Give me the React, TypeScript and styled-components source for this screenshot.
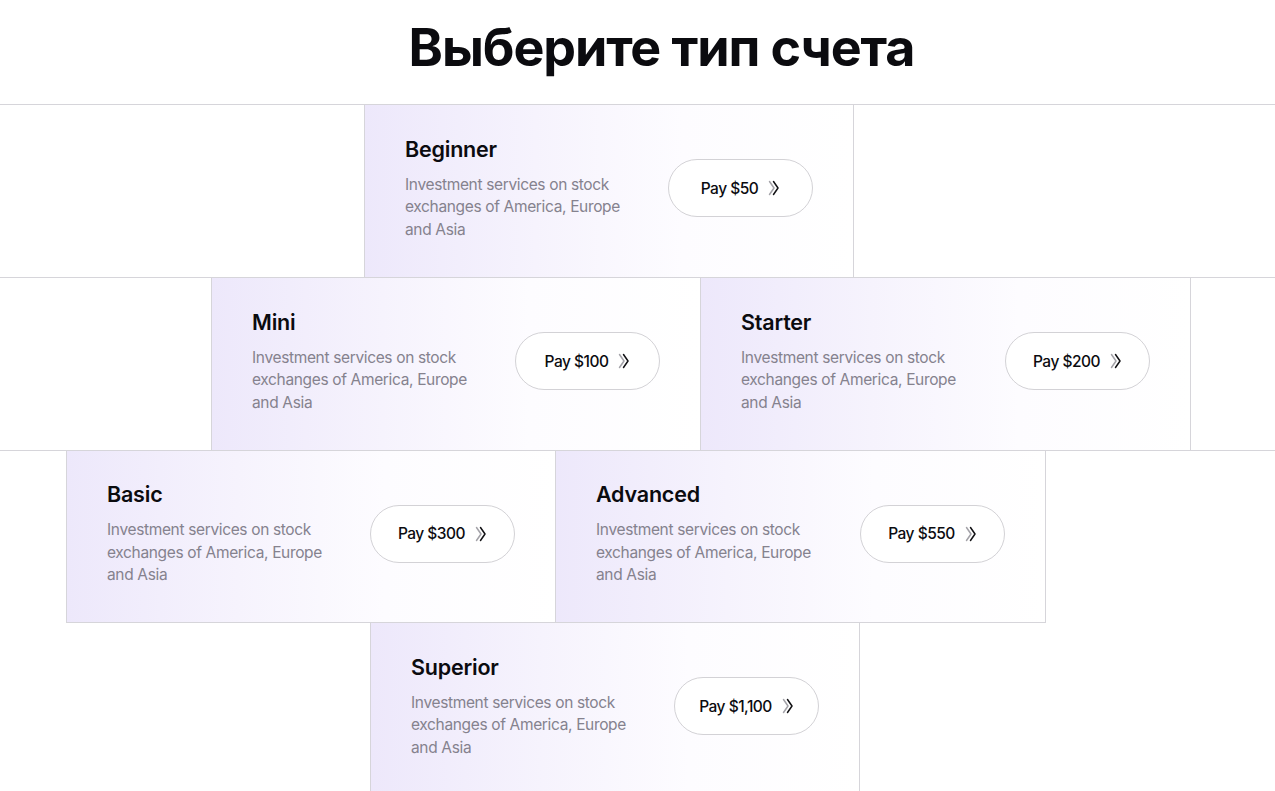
import React from "react";
import styled, { createGlobalStyle } from "styled-components";

const GlobalStyle = createGlobalStyle`
  html, body {
    margin: 0;
    padding: 0;
    background: #ffffff;
    font-family: Inter, "Noto Sans", "Liberation Sans", sans-serif;
    color: #0d0d12;
    overflow: hidden;
  }
  * { box-sizing: border-box; }
`;

const Page = styled.main`
  width: 1275px;
  height: 791px;
  overflow: hidden;
`;

const Header = styled.header`
  height: 104px;
  display: flex;
  align-items: center;
  justify-content: center;
  padding-left: 48px;
  padding-bottom: 8px;
`;

const Title = styled.h1`
  margin: 0;
  font-size: 52px;
  font-weight: 700;
  letter-spacing: -1.1px;
  line-height: 1;
  color: #0b0b0f;
`;

const Row = styled.section<{ $offset: number; $top?: boolean; $bottom?: boolean }>`
  display: flex;
  padding-left: ${(p) => p.$offset}px;
  border-top: ${(p) => (p.$top ? "1px solid #d6d5da" : "none")};
  border-bottom: ${(p) => (p.$bottom ? "1px solid #d6d5da" : "none")};
`;

const Card = styled.article<{ $closed?: boolean }>`
  width: 490px;
  height: 172px;
  flex: none;
  display: flex;
  align-items: center;
  justify-content: space-between;
  padding: 0 40px 0 40px;
  border-left: 1px solid #d6d5da;
  border-right: 1px solid #d6d5da;
  border-bottom: ${(p) => (p.$closed ? "1px solid #d6d5da" : "none")};
  background: linear-gradient(90deg, #ede8fb 0%, #f6f3fd 35%, #fdfcff 65%, #ffffff 100%);
  & + & {
    width: 491px;
    margin-left: -1px;
  }
`;

const Info = styled.div`
  width: 240px;
  display: flex;
  flex-direction: column;
  gap: 13px;
  margin-bottom: 4px;
`;

const Name = styled.h2`
  margin: 0;
  font-size: 21.5px;
  font-weight: 600;
  line-height: 24px;
  letter-spacing: -0.2px;
  color: #0b0b0f;
`;

const Desc = styled.p`
  margin: 0;
  font-size: 15.5px;
  font-weight: 400;
  line-height: 22.5px;
  letter-spacing: -0.35px;
  color: #85828e;
`;

const PayButton = styled.button`
  width: 145px;
  height: 58px;
  flex: none;
  display: flex;
  align-items: center;
  justify-content: center;
  gap: 10px;
  margin-bottom: 6px;
  border: 1px solid #d3d2d6;
  border-radius: 29px;
  background: #ffffff;
  font-family: inherit;
  font-size: 15.5px;
  font-weight: 500;
  letter-spacing: -0.5px;
  color: #0b0b0f;
  cursor: pointer;
`;

const Chevrons = () => (
  <svg width="12" height="16" viewBox="0 0 12 16" fill="none">
    <path d="M1.5 1.5 L6 8 L1.5 14.5" stroke="#a3a2a8" strokeWidth="1.5" strokeLinecap="round" strokeLinejoin="round" />
    <path d="M5.5 1.5 L10 8 L5.5 14.5" stroke="#111114" strokeWidth="1.5" strokeLinecap="round" strokeLinejoin="round" />
  </svg>
);

type Plan = { name: string; price: string };

const DESC = "Investment services on stock exchanges of America, Europe and Asia";

const PlanCard = ({ plan, closed }: { plan: Plan; closed?: boolean }) => (
  <Card $closed={closed}>
    <Info>
      <Name>{plan.name}</Name>
      <Desc>{DESC}</Desc>
    </Info>
    <PayButton>
      Pay {plan.price}
      <Chevrons />
    </PayButton>
  </Card>
);

const rows: { offset: number; top?: boolean; bottom?: boolean; closed?: boolean; plans: Plan[] }[] = [
  { offset: 364, top: true, bottom: true, plans: [{ name: "Beginner", price: "$50" }] },
  {
    offset: 211,
    bottom: true,
    plans: [
      { name: "Mini", price: "$100" },
      { name: "Starter", price: "$200" },
    ],
  },
  {
    offset: 66,
    closed: true,
    plans: [
      { name: "Basic", price: "$300" },
      { name: "Advanced", price: "$550" },
    ],
  },
  { offset: 370, plans: [{ name: "Superior", price: "$1,100" }] },
];

export default function App() {
  return (
    <Page>
      <GlobalStyle />
      <Header>
        <Title>Выберите тип счета</Title>
      </Header>
      {rows.map((r, i) => (
        <Row key={i} $offset={r.offset} $top={r.top} $bottom={r.bottom}>
          {r.plans.map((p) => (
            <PlanCard key={p.name} plan={p} closed={r.closed} />
          ))}
        </Row>
      ))}
    </Page>
  );
}
